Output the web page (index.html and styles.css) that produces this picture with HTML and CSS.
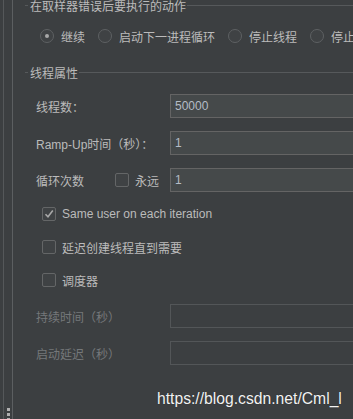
FILE: index.html
```html
<!DOCTYPE html>
<html lang="zh-CN">
<head>
    <meta charset="UTF-8">
    <meta name="viewport" content="width=device-width, initial-scale=1.0">
    <title>线程组</title>
    <link rel="stylesheet" href="styles.css">
</head>
<body>
    <div class="panel">
        <div class="gutter">
            <div class="grip"><span></span><span></span><span></span></div>
        </div>

        <div class="content">
            <section class="group">
                <div class="group-title"><span>在取样器错误后要执行的动作</span></div>
                <div class="radio-row">
                    <label class="radio"><span class="radio-btn checked"></span>继续</label>
                    <label class="radio"><span class="radio-btn"></span>启动下一进程循环</label>
                    <label class="radio"><span class="radio-btn"></span>停止线程</label>
                    <label class="radio"><span class="radio-btn"></span>停止测试</label>
                </div>
            </section>

            <section class="group props">
                <div class="group-title"><span>线程属性</span></div>

                <div class="field">
                    <span class="field-label">线程数：</span>
                    <div class="input">50000</div>
                </div>
                <div class="field">
                    <span class="field-label">Ramp-Up时间（秒）：</span>
                    <div class="input">1</div>
                </div>
                <div class="field">
                    <span class="loop-label">循环次数</span>
                    <label class="forever"><span class="check-box"></span>永远</label>
                    <div class="input">1</div>
                </div>

                <div class="checks">
                    <label class="check">
                        <span class="check-box">
                            <svg width="12" height="12" viewBox="0 0 12 12"><path d="M2.5 6.2 L5 8.8 L9.8 2.6" fill="none" stroke="#a8a8a8" stroke-width="1.6"/></svg>
                        </span>
                        Same user on each iteration
                    </label>
                    <label class="check"><span class="check-box"></span>延迟创建线程直到需要</label>
                    <label class="check"><span class="check-box"></span>调度器</label>
                </div>

                <div class="field disabled first-disabled">
                    <span class="field-label">持续时间（秒）</span>
                    <div class="input"></div>
                </div>
                <div class="field disabled">
                    <span class="field-label">启动延迟（秒）</span>
                    <div class="input"></div>
                </div>
            </section>
        </div>
    </div>

    <div class="watermark">https://blog.csdn.net/Cml_l</div>
</body>
</html>
```

FILE: styles.css
```css
body {
    margin: 0;
    height: 419px;
    overflow: hidden;
    background-color: #3c3f41;
    color: #bbbbbb;
    font-family: "Liberation Sans", "Noto Sans CJK SC", sans-serif;
    font-size: 12px;
}
.panel {
    display: flex;
    height: 419px;
}
.gutter {
    margin-left: 3px;
    width: 8px;
    border-left: 1px solid #55585a;
    border-right: 1px solid #5c5f61;
    display: flex;
    flex-direction: column;
    justify-content: flex-end;
    align-items: center;
}
.grip {
    display: flex;
    flex-direction: column;
    gap: 2px;
    margin-bottom: -2px;
}
.grip span {
    width: 3px;
    height: 3px;
    background-color: #b0b0b0;
}
.content {
    flex: 1;
    min-width: 0;
    padding-left: 12px;
    overflow: hidden;
    white-space: nowrap;
}
.group-title {
    display: flex;
    align-items: center;
    height: 14px;
    line-height: 14px;
}
.group-title::before,
.group-title::after {
    content: "";
    height: 1px;
    margin-bottom: 3px;
    background-color: #56595b;
}
.group-title::before {
    width: 3px;
    margin-right: 2px;
}
.group-title::after {
    flex: 1;
    margin-left: 1px;
}
.radio-row {
    display: flex;
    align-items: center;
    gap: 13px;
    height: 16px;
    margin-top: 14px;
    padding-left: 15px;
}
.radio {
    display: flex;
    align-items: center;
    gap: 7px;
}
.radio-btn {
    width: 14px;
    height: 14px;
    box-sizing: border-box;
    border: 1px solid #5e6163;
    border-radius: 50%;
    background-color: #3f4244;
    display: flex;
    align-items: center;
    justify-content: center;
}
.radio-btn.checked::after {
    content: "";
    width: 4px;
    height: 4px;
    border-radius: 50%;
    background-color: #a8a8a8;
}
.props {
    margin-top: 23px;
}
.field {
    display: flex;
    align-items: center;
    height: 24px;
    margin-top: 13px;
    padding-left: 11px;
}
.field-label {
    width: 134px;
    flex-shrink: 0;
}
.loop-label {
    width: 79px;
    flex-shrink: 0;
}
.forever {
    width: 55px;
    flex-shrink: 0;
    display: flex;
    align-items: center;
    gap: 6px;
}
.input {
    flex: 1;
    height: 24px;
    box-sizing: border-box;
    margin-right: -5px;
    padding-left: 4px;
    line-height: 22px;
    border: 1px solid #646464;
    background-color: #45494a;
    color: #b4bcc6;
}
.check-box {
    width: 14px;
    height: 14px;
    box-sizing: border-box;
    flex-shrink: 0;
    border: 1px solid #646667;
    border-radius: 2px;
    background-color: #3f4244;
    display: flex;
    align-items: center;
    justify-content: center;
}
.checks {
    display: flex;
    flex-direction: column;
    gap: 17px;
    margin-top: 14px;
    padding-left: 17px;
}
.check {
    display: flex;
    align-items: center;
    gap: 6px;
    height: 16px;
}
.first-disabled {
    margin-top: 16px;
}
.disabled {
    color: #75787a;
}
.disabled .input {
    border-color: #535658;
    background-color: #3c3f41;
}
.watermark {
    position: absolute;
    left: 157px;
    top: 390px;
    font-family: "Liberation Sans", sans-serif;
    font-size: 15.7px;
    color: #f2f2f2;
    text-shadow: 0 0 1px rgba(0,0,0,0.4);
}
```
